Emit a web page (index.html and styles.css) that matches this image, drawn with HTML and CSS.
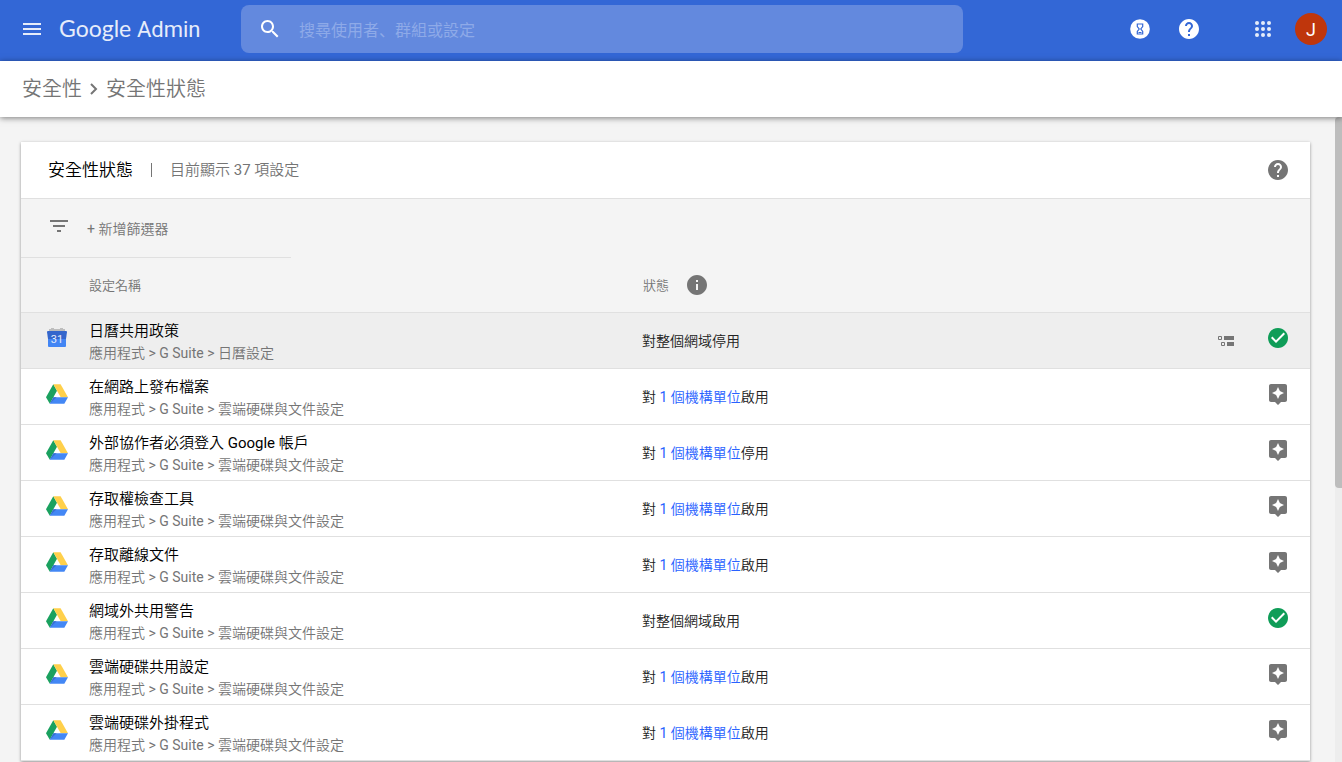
FILE: index.html
```html
<!DOCTYPE html>
<html lang="zh-Hant">
<head>
<meta charset="utf-8">
<meta name="viewport" content="width=device-width, initial-scale=1">
<title>安全性狀態 - Google Admin</title>
<link rel="stylesheet" href="styles.css">
</head>
<body>
<svg class="defs" aria-hidden="true">
  <symbol id="i-drive" viewBox="0 0 22 20">
    <path fill="#1aa15f" d="M7.3 0.3 L11 6.8 L3.8 19.7 L0 13.3z"/>
    <path fill="#ffd04b" d="M7.3 0.3h7.3L22 13.3h-7.3z"/>
    <path fill="#4387f5" d="M7.4 13.3H22l-3.7 6.4H3.8z"/>
    <path fill="#3a6fd0" d="M7.4 13.3h3.2l-6.8 6.4z"/>
  </symbol>
  <symbol id="i-check" viewBox="0 0 24 24">
    <path fill="#0f9d58" d="M12 2C6.48 2 2 6.48 2 12s4.48 10 10 10 10-4.48 10-10S17.52 2 12 2z"/>
    <path fill="#fff" d="M10 17l-5-5 1.41-1.41L10 14.17l7.59-7.59L19 8z"/>
  </symbol>
  <symbol id="i-rec" viewBox="0 0 24 24">
    <path d="M19 2H5c-1.1 0-2 .9-2 2v14c0 1.1.9 2 2 2h4l3 3 3-3h4c1.1 0 2-.9 2-2V4c0-1.1-.9-2-2-2z"/>
    <path fill="#fff" d="M13.88 12.88L12 17l-1.88-4.12L6 11l4.12-1.88L12 5l1.88 4.12L18 11z"/>
  </symbol>
  <symbol id="i-help" viewBox="0 0 24 24">
    <path d="M12 2C6.48 2 2 6.48 2 12s4.48 10 10 10 10-4.48 10-10S17.52 2 12 2zm1 17h-2v-2h2v2zm2.07-7.75l-.9.92C13.45 12.9 13 13.5 13 15h-2v-.5c0-1.1.45-2.1 1.17-2.83l1.24-1.26c.37-.36.59-.86.59-1.41 0-1.1-.9-2-2-2s-2 .9-2 2H8c0-2.21 1.79-4 4-4s4 1.79 4 4c0 .88-.36 1.68-.93 2.25z"/>
  </symbol>
</svg>

<header class="appbar">
  <button class="icon-btn menu" aria-label="主選單">
    <svg viewBox="0 0 24 24"><path d="M3 18h18v-2H3v2zm0-5h18v-2H3v2zm0-7v2h18V6H3z"/></svg>
  </button>
  <a class="brand" href="#"><span class="brand-google">Google</span> <span class="brand-admin">Admin</span></a>
  <form class="search" role="search">
    <button class="icon-btn" type="button" aria-label="搜尋">
      <svg viewBox="0 0 24 24"><path d="M15.5 14h-.79l-.28-.27C15.41 12.59 16 11.11 16 9.5 16 5.91 13.09 3 9.5 3S3 5.91 3 9.5 5.91 16 9.5 16c1.61 0 3.09-.59 4.23-1.57l.27.28v.79l5 4.99L20.49 19l-4.99-5zm-6 0C7.01 14 5 11.99 5 9.5S7.01 5 9.5 5 14 7.01 14 9.5 11.99 14 9.5 14z"/></svg>
    </button>
    <input class="search-input" type="text" lang="zh-Hans" aria-label="搜尋" placeholder="搜尋使用者、群組或設定">
  </form>
  <nav class="tools">
    <button class="icon-btn" aria-label="工作">
      <svg viewBox="0 0 24 24"><circle cx="12" cy="12" r="9.8"/><g fill="none" stroke="#3367d6"><path d="M9.3 7h5.4v2.5L12.8 12l1.9 2.5V17H9.3v-2.5l1.9-2.5-1.9-2.5z" stroke-width="1.2"/><path d="M10.5 15.5h3"/></g></svg>
    </button>
    <button class="icon-btn" aria-label="說明"><svg viewBox="0 0 24 24"><use href="#i-help"/></svg></button>
    <button class="icon-btn apps" aria-label="應用程式">
      <svg viewBox="0 0 24 24"><circle cx="6" cy="6" r="2"/><circle cx="12" cy="6" r="2"/><circle cx="18" cy="6" r="2"/><circle cx="6" cy="12" r="2"/><circle cx="12" cy="12" r="2"/><circle cx="18" cy="12" r="2"/><circle cx="6" cy="18" r="2"/><circle cx="12" cy="18" r="2"/><circle cx="18" cy="18" r="2"/></svg>
    </button>
    <button class="avatar" aria-label="帳戶">J</button>
  </nav>
</header>

<nav class="crumbs" aria-label="導覽路徑">
  <a href="#">安全性</a>
  <svg class="chevron" viewBox="0 0 10 14" aria-hidden="true"><path d="M2 2l5 5-5 5"/></svg>
  <a href="#">安全性狀態</a>
</nav>

<div class="viewport">
  <main class="content">
    <section class="card">
      <div class="card-head">
        <h1>安全性狀態</h1>
        <span class="divider"></span>
        <span class="count">目前顯示 37 項設定</span>
        <button class="icon-btn card-help" aria-label="說明"><svg viewBox="0 0 24 24"><use href="#i-help"/></svg></button>
      </div>
      <div class="filter">
        <svg class="filter-icon" viewBox="0 0 24 24" aria-hidden="true"><path d="M10 18h4v-2h-4v2zM3 6v2h18V6H3zm3 7h12v-2H6v2z"/></svg>
        <button class="filter-add">+ 新增篩選器</button>
      </div>
      <table class="settings">
        <thead>
          <tr>
            <th class="c-icon"></th>
            <th class="c-name">設定名稱</th>
            <th class="c-status"><span class="status-head"><span>狀態</span>
              <button class="icon-btn" aria-label="狀態說明"><svg viewBox="0 0 24 24"><path d="M12 2C6.48 2 2 6.48 2 12s4.48 10 10 10 10-4.48 10-10S17.52 2 12 2zm1 15h-2v-6h2v6zm0-8h-2V7h2v2z"/></svg></button></span></th>
            <th class="c-more"></th>
            <th class="c-risk"></th>
          </tr>
        </thead>
        <tbody>
          <tr class="active">
            <td class="c-icon"><svg class="calendar" viewBox="0 0 20 20" aria-hidden="true"><path fill="#bdbdbd" d="M2 1h2V0h3v1h6V0h3v1h2v3H2z"/><path fill="#3466cc" d="M1 3h18q1 0 1 1l-1 7H1L0 4q0-1 1-1z"/><path fill="#4285f4" d="M1 11h18v7q0 1-1 1H2q-1 0-1-1z"/><text x="10" y="15" text-anchor="middle">31</text></svg></td>
            <td class="c-name"><div class="name">日曆共用政策</div><div class="path">應用程式 &gt; G Suite &gt; 日曆設定</div></td>
            <td class="c-status">對整個網域停用</td>
            <td class="c-more"><button class="icon-btn" aria-label="檢視機構單位"><svg class="tree" viewBox="0 0 16 10"><path d="M6 0h10v4H6zM9 6h7v4H9z"/><path class="line" d="M.5.5h3v3h-3zM3.5 6.5h3v3h-3z"/></svg></button></td>
            <td class="c-risk"><svg viewBox="0 0 24 24"><use href="#i-check"/></svg></td>
          </tr>
          <tr>
            <td class="c-icon"><svg class="drive"><use href="#i-drive"/></svg></td>
            <td class="c-name"><div class="name">在網路上發布檔案</div><div class="path">應用程式 &gt; G Suite &gt; 雲端硬碟與文件設定</div></td>
            <td class="c-status">對 <a href="#">1 個機構單位</a>啟用</td>
            <td class="c-more"></td>
            <td class="c-risk"><svg viewBox="0 0 24 24"><use href="#i-rec"/></svg></td>
          </tr>
          <tr>
            <td class="c-icon"><svg class="drive"><use href="#i-drive"/></svg></td>
            <td class="c-name"><div class="name">外部協作者必須登入 Google 帳戶</div><div class="path">應用程式 &gt; G Suite &gt; 雲端硬碟與文件設定</div></td>
            <td class="c-status">對 <a href="#">1 個機構單位</a>停用</td>
            <td class="c-more"></td>
            <td class="c-risk"><svg viewBox="0 0 24 24"><use href="#i-rec"/></svg></td>
          </tr>
          <tr>
            <td class="c-icon"><svg class="drive"><use href="#i-drive"/></svg></td>
            <td class="c-name"><div class="name">存取權檢查工具</div><div class="path">應用程式 &gt; G Suite &gt; 雲端硬碟與文件設定</div></td>
            <td class="c-status">對 <a href="#">1 個機構單位</a>啟用</td>
            <td class="c-more"></td>
            <td class="c-risk"><svg viewBox="0 0 24 24"><use href="#i-rec"/></svg></td>
          </tr>
          <tr>
            <td class="c-icon"><svg class="drive"><use href="#i-drive"/></svg></td>
            <td class="c-name"><div class="name">存取離線文件</div><div class="path">應用程式 &gt; G Suite &gt; 雲端硬碟與文件設定</div></td>
            <td class="c-status">對 <a href="#">1 個機構單位</a>啟用</td>
            <td class="c-more"></td>
            <td class="c-risk"><svg viewBox="0 0 24 24"><use href="#i-rec"/></svg></td>
          </tr>
          <tr>
            <td class="c-icon"><svg class="drive"><use href="#i-drive"/></svg></td>
            <td class="c-name"><div class="name">網域外共用警告</div><div class="path">應用程式 &gt; G Suite &gt; 雲端硬碟與文件設定</div></td>
            <td class="c-status">對整個網域啟用</td>
            <td class="c-more"></td>
            <td class="c-risk"><svg viewBox="0 0 24 24"><use href="#i-check"/></svg></td>
          </tr>
          <tr>
            <td class="c-icon"><svg class="drive"><use href="#i-drive"/></svg></td>
            <td class="c-name"><div class="name">雲端硬碟共用設定</div><div class="path">應用程式 &gt; G Suite &gt; 雲端硬碟與文件設定</div></td>
            <td class="c-status">對 <a href="#">1 個機構單位</a>啟用</td>
            <td class="c-more"></td>
            <td class="c-risk"><svg viewBox="0 0 24 24"><use href="#i-rec"/></svg></td>
          </tr>
          <tr>
            <td class="c-icon"><svg class="drive"><use href="#i-drive"/></svg></td>
            <td class="c-name"><div class="name">雲端硬碟外掛程式</div><div class="path">應用程式 &gt; G Suite &gt; 雲端硬碟與文件設定</div></td>
            <td class="c-status">對 <a href="#">1 個機構單位</a>啟用</td>
            <td class="c-more"></td>
            <td class="c-risk"><svg viewBox="0 0 24 24"><use href="#i-rec"/></svg></td>
          </tr>
        </tbody>
      </table>
    </section>
  </main>
  <div class="scrollbar" aria-hidden="true"><div class="thumb"></div></div>
</div>
</body>
</html>
```

FILE: styles.css
```css
* { box-sizing: border-box; }

body {
  margin: 0;
  height: 100vh;
  display: flex;
  flex-direction: column;
  overflow: hidden;
  background: #f4f4f4;
  color: #212121;
  font-family: Roboto, "Noto Sans CJK TC DemiLight", "Noto Sans CJK TC Light", "Noto Sans CJK TC", sans-serif;
  font-size: 14px;
  font-weight: 400;
}

.defs { display: none; }
svg { display: block; }
a { text-decoration: none; color: inherit; }
button, input {
  font: inherit;
  color: inherit;
  border: 0;
  padding: 0;
  background: none;
}

.icon-btn { flex: none; fill: currentColor; }
.icon-btn svg { width: 24px; height: 24px; }

/* App bar */
.appbar {
  flex: none;
  display: flex;
  align-items: center;
  height: 61px;
  padding: 0 15px 3px 20px;
  background: #3367d6;
  color: #fff;
}
.menu { color: #e6ecfa; }
.brand {
  width: 182px;
  margin-left: 15px;
  font-size: 23px;
  line-height: 28px;
  color: #e6ecfa;
  white-space: nowrap;
}
.brand-google { font-family: Lato, sans-serif; }
.brand-admin { font-size: 22px; }
.search {
  flex: 0 1 722px;
  display: flex;
  align-items: center;
  gap: 17px;
  height: 48px;
  padding-left: 17px;
  border-radius: 8px;
  background: #6389de;
}
.search-input {
  flex: 1;
  min-width: 0;
  height: 48px;
  padding-top: 2px;
  font-family: Roboto, "Noto Sans CJK SC", sans-serif;
  font-size: 16px;
  outline: 0;
}
.search-input::placeholder { color: #8eaae8; opacity: 1; }
.tools {
  display: flex;
  align-items: center;
  gap: 25px;
  margin-left: auto;
}
.apps { margin: 0 -5px 0 25px; color: #e6ecfa; }
.avatar {
  width: 32px;
  height: 32px;
  border-radius: 50%;
  background: #bf360c;
  font-size: 18px;
}

/* Breadcrumbs */
.crumbs {
  flex: none;
  z-index: 1;
  display: flex;
  align-items: center;
  gap: 7px;
  height: 56px;
  padding: 0 22px 4px;
  background: #fff;
  box-shadow: 0 1px 6px rgba(0, 0, 0, .5);
  color: #757575;
  font-size: 20px;
}
.chevron {
  width: 10px;
  height: 14px;
  margin-top: 4px;
  fill: none;
  stroke: #757575;
  stroke-width: 2;
}

/* Scrolling area */
.viewport { flex: 1; min-height: 0; display: flex; }
.content {
  flex: 1;
  min-width: 0;
  padding: 25px 25px 0 21px;
  overflow: hidden;
}
.scrollbar { width: 7px; background: #ededed; }
.thumb { height: 371px; border-radius: 4px 0 0 4px; background: #bdbdbd; }

/* Card */
.card {
  background: #fff;
  box-shadow: 0 1px 3px rgba(0, 0, 0, .4);
}
.card-head {
  display: flex;
  align-items: center;
  height: 57px;
  padding: 0 20px 0 27px;
  border-bottom: 1px solid #e0e0e0;
}
h1, .count { margin: 0; padding-bottom: 4px; }
h1 { font-size: 17px; font-weight: 400; color: #000; }
.divider { width: 1px; height: 14px; margin: 0 18px; background: #757575; }
.count { color: #757575; font-size: 15px; }
.card-help { margin-left: auto; color: #757575; }

.filter {
  display: flex;
  align-items: center;
  gap: 16px;
  height: 59px;
  padding-left: 26px;
  background: linear-gradient(#e0e0e0, #e0e0e0) left bottom / 270px 1px no-repeat #f4f4f4;
  color: #757575;
}
.filter-icon { width: 24px; height: 24px; margin-bottom: 6px; fill: #757575; }
.filter-add { line-height: 20px; }

/* Settings table */
.settings {
  width: 100%;
  table-layout: fixed;
  border-collapse: separate;
  border-spacing: 0;
}
.settings th {
  height: 55px;
  padding: 0 0 2px;
  border-bottom: 1px solid #e0e0e0;
  background: #f4f4f4;
  color: #757575;
  font-size: 13px;
  font-weight: 400;
  text-align: left;
}
.settings td {
  height: 56px;
  padding: 0 0 2px;
  border-bottom: 1px solid #e0e0e0;
}
.active { background: #eee; }

.settings .c-icon { width: 68px; padding: 0 0 6px 25px; }
.settings .c-name { width: 553px; }
.settings td.c-name { padding: 3px 0 0; }
.settings .c-more { width: 48px; padding: 0; }
.settings .c-risk { width: 44px; padding-bottom: 6px; }

.drive { width: 22px; height: 20px; }
.calendar { width: 20px; height: 20px; margin-left: 1px; }
.calendar text { font-size: 11px; fill: #e6ecfa; }

.name { font-size: 15px; line-height: 22px; color: #000; }
.path { line-height: 22px; color: #757575; }
.c-status a { color: #2962ff; }
.status-head { display: flex; align-items: center; gap: 16px; padding: 2px 0 0 1px; }
.status-head span { padding-bottom: 2px; }
.c-risk svg { width: 24px; height: 24px; fill: #757575; }
.c-more .icon-btn { color: #757575; }
.icon-btn .tree { width: 16px; height: 10px; }
.tree .line { fill: none; stroke: #757575; }
```
